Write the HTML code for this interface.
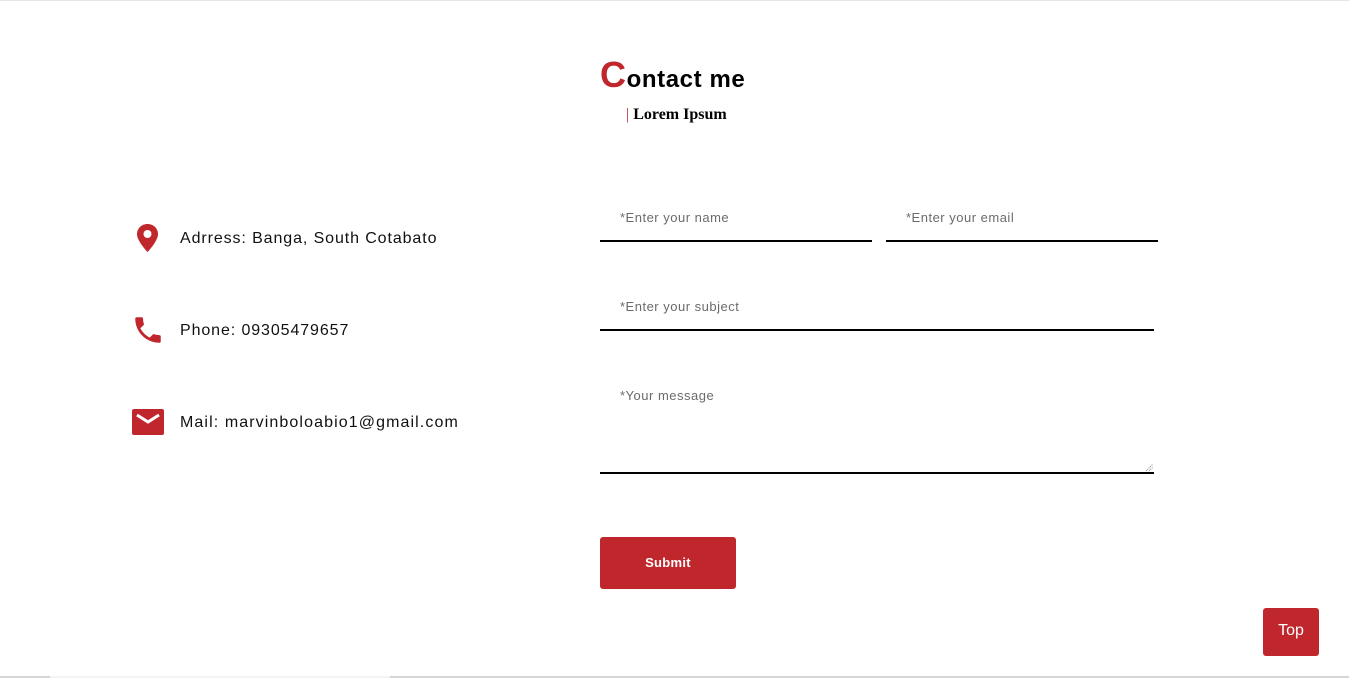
<!DOCTYPE html>
<html><head><meta charset="utf-8"><style>
html,body{margin:0;padding:0;width:1349px;height:678px;overflow:hidden;background:#fff;font-family:"Liberation Sans",sans-serif;}
.a{position:absolute;}
.ph{position:absolute;font-size:13px;color:#6b6b6b;letter-spacing:0.5px;}
.line{position:absolute;height:2px;background:#000;}
.info{position:absolute;font-size:16px;color:#111;letter-spacing:0.9px;}
</style></head><body>
<div class="a" style="left:0;top:0;width:1349px;height:1px;background:#e6e6e6"></div>
<div class="a" style="left:600px;top:54px;font-weight:bold;font-size:24px;color:#000;letter-spacing:0.6px"><span style="color:#c0272d;font-size:36px">C</span>ontact me</div>
<div class="a" style="left:626px;top:106px;font-family:'Liberation Serif',serif;font-weight:bold;font-size:16px;color:#000"><span style="color:#c0272d;font-weight:normal">|</span> Lorem Ipsum</div>

<svg class="a" style="left:135px;top:223px" width="25" height="30" viewBox="0 0 24 30"><path d="M12 1C6 1 1.5 5.5 1.5 11.2 1.5 18 12 29 12 29S22.5 18 22.5 11.2C22.5 5.5 18 1 12 1Z" fill="#c0272d"/><circle cx="12" cy="11" r="4" fill="#fff"/></svg>
<div class="info" style="left:180px;top:230px">Adrress: Banga, South Cotabato</div>

<svg class="a" style="left:131px;top:313px" width="34" height="34" viewBox="0 0 24 24"><path d="M6.6 10.8c1.4 2.8 3.8 5.1 6.6 6.6l2.2-2.2c.3-.3.7-.4 1-.2 1.1.4 2.3.6 3.6.6.6 0 1 .4 1 1V20c0 .6-.4 1-1 1C10.6 21 3 13.4 3 4c0-.6.4-1 1-1h3.5c.6 0 1 .4 1 1 0 1.3.2 2.5.6 3.6.1.3 0 .7-.2 1z" fill="#c0272d"/></svg>
<div class="info" style="left:180px;top:322px">Phone: 09305479657</div>

<svg class="a" style="left:132px;top:409px" width="32" height="26" viewBox="0 0 32 26"><rect x="0" y="0" width="32" height="26" rx="2" fill="#c0272d"/><path d="M5 6L16 13 27 6" stroke="#fff" stroke-width="3" fill="none"/></svg>
<div class="info" style="left:180px;top:414px;letter-spacing:1.1px">Mail: marvinboloabio1@gmail.com</div>

<div class="ph" style="left:620px;top:210px">*Enter your name</div>
<div class="line" style="left:600px;top:240px;width:272px"></div>
<div class="ph" style="left:906px;top:210px">*Enter your email</div>
<div class="line" style="left:886px;top:240px;width:272px"></div>
<div class="ph" style="left:620px;top:299px">*Enter your subject</div>
<div class="line" style="left:600px;top:329px;width:554px"></div>
<div class="ph" style="left:620px;top:388px">*Your message</div>
<div class="line" style="left:600px;top:472px;width:554px"></div>
<svg class="a" style="left:1144px;top:462px" width="10" height="10"><path d="M2 9L9 2M5 9L9 5" stroke="#888" stroke-width="1" stroke-dasharray="1 1"/></svg>

<div class="a" style="left:600px;top:537px;width:136px;height:52px;background:#c0272d;border-radius:3px;color:#fff;font-weight:bold;font-size:13px;text-align:center;line-height:52px;letter-spacing:0.3px">Submit</div>
<div class="a" style="left:1263px;top:608px;width:56px;height:48px;background:#c0272d;border-radius:3px;color:#fff;font-size:16px;text-align:center;line-height:46px">Top</div>
<div class="a" style="left:0;top:676px;width:1349px;height:2px;background:#d6d6d6"></div>
<div class="a" style="left:50px;top:676px;width:340px;height:2px;background:#f4f4f4"></div>
</body></html>
